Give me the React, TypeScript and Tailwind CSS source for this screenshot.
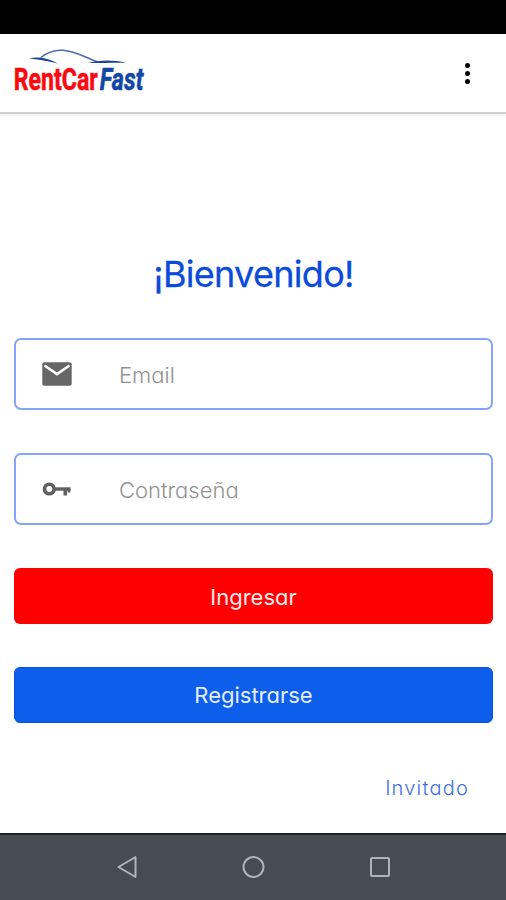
import { JSX } from "react";

function Logo(): JSX.Element {
  return (
    <svg width="134" height="50" viewBox="0 0 134 50" className="overflow-visible font-['Roboto',sans-serif] font-bold">
      <path d="M18 10.500C27 8.500 36 9.500 47 15.500C38 13 30 12 18 10.500Z" fill="#1b4394" />
      <path d="M30 9.500C37 3.500 45 1.800 52 2.200C65 3 75 10 87 14" fill="none" stroke="#4a6cac" strokeWidth="1.500" />
      <path d="M77 15C89 12 102 11.500 115 15C103 14 91 15.500 77 15Z" fill="#1b4394" />
      <text x="2.800" y="41.500" fontSize="32" fill="#fa0a10" stroke="#fa0a10" strokeWidth="0.600" textLength="84" lengthAdjust="spacingAndGlyphs">RentCar</text>
      <text x="88.800" y="41.500" fontSize="32" fontStyle="italic" fill="#1046a6" stroke="#1046a6" strokeWidth="0.600" textLength="43.500" lengthAdjust="spacingAndGlyphs">Fast</text>
    </svg>
  );
}

function MailIcon(): JSX.Element {
  return (
    <svg width="30" height="24" viewBox="0 0 30 24" fill="none">
      <rect x="0.300" y="0.300" width="29.400" height="23.400" rx="2" fill="#666" />
      <path d="M2.500 3.500L15 12L27.500 3.500" stroke="#fff" strokeWidth="2.700" />
    </svg>
  );
}

function KeyIcon(): JSX.Element {
  return (
    <svg width="30" height="16" viewBox="0 0 30 16" fill="none" stroke="#606060">
      <circle cx="7.300" cy="8" r="4.800" strokeWidth="3.600" />
      <path d="M12 8H28.500" strokeWidth="3.400" />
      <path d="M23.300 8V14.500" strokeWidth="3.600" />
      <path d="M27 8V11.500" strokeWidth="2.600" />
    </svg>
  );
}

export default function App(): JSX.Element {
  return (
    <div className="flex h-[900px] w-[506px] flex-col overflow-hidden bg-white font-['Inter','Noto_Sans',sans-serif] [font-feature-settings:'cv11']">
      <div className="h-[34px] shrink-0 bg-black" />
      <header className="flex h-[80px] shrink-0 items-center justify-between border-b-2 border-[#d0d0d0] pr-[36px] pl-[11px] shadow-[0_1px_3px_#0000001a]">
        <Logo />
        <div className="flex flex-col gap-[3px]">
          <span className="size-[5px] rounded-full bg-black" />
          <span className="size-[5px] rounded-full bg-black" />
          <span className="size-[5px] rounded-full bg-black" />
        </div>
      </header>

      <main className="flex grow flex-col pt-[135px] pr-[13px] pl-[14px]">
        <h1 className="h-[50px] text-center text-[36px] leading-[50px] tracking-[-0.7px] whitespace-nowrap text-[#0b4bdc] [-webkit-text-stroke:0.3px_#0b4bdc]">¡Bienvenido!</h1>
        {/* Credentials */}
        <label className="mt-[39px] flex h-[72px] items-center rounded-[7px] border-2 border-[#84a4f8] pl-[26px]">
          <MailIcon />
          <input type="text" placeholder="Email" className="ml-[47px] w-[280px] pt-[2px] text-[22px] font-light outline-none placeholder:text-[#929292]" />
        </label>
        <label className="mt-[43px] flex h-[72px] items-center rounded-[7px] border-2 border-[#84a4f8] pl-[26px]">
          <KeyIcon />
          <input type="text" placeholder="Contraseña" className="ml-[47px] w-[280px] pt-[2px] text-[22px] font-light outline-none placeholder:text-[#929292]" />
        </label>
        {/* Actions */}
        <button className="mt-[43px] h-[56px] rounded-[6px] bg-[#ff0000] pt-[2px] text-[22px] text-[#ffe9e9]">Ingresar</button>
        <button className="mt-[43px] h-[56px] rounded-[6px] border border-[#0752da] bg-[#0d5eeb] pt-px text-[22px] text-[#e4edff]">Registrarse</button>
        <a className="mt-[51px] mr-[24px] self-end text-[20px] leading-[28px] font-light tracking-[1.200px] text-[#426fe4]">Invitado</a>
      </main>

      <nav className="flex h-[67px] shrink-0 items-center justify-between border-t-2 border-[#14292d] bg-[#454d53] pr-[114px] pb-[2px] pl-[115px]">
        <svg width="24" height="24" viewBox="0 0 24 24" fill="none" stroke="#aeb4b7" strokeWidth="2" strokeLinejoin="round">
          <path d="M20.500 2V22L3.500 12Z" />
        </svg>
        <svg width="24" height="24" viewBox="0 0 24 24" fill="none" stroke="#aeb4b7" strokeWidth="2">
          <circle cx="11.500" cy="12" r="10" />
        </svg>
        <svg width="24" height="24" viewBox="0 0 24 24" fill="none" stroke="#aeb4b7" strokeWidth="2">
          <rect x="3" y="3" width="18" height="18" rx="1" />
        </svg>
      </nav>
    </div>
  );
}
